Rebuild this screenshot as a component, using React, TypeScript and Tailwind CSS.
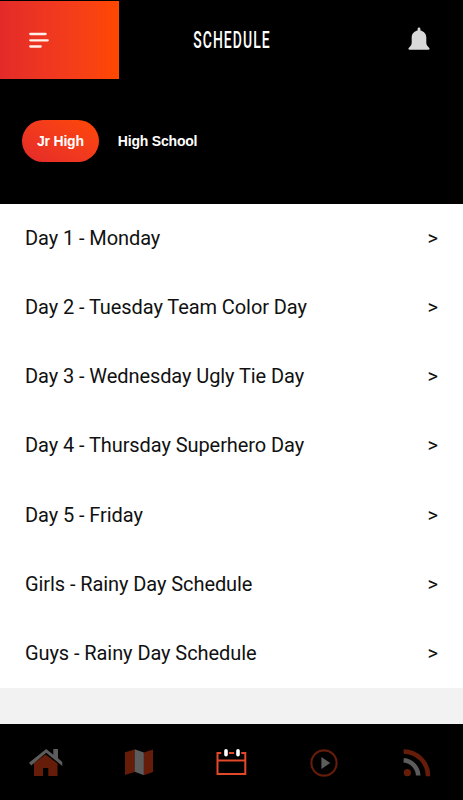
import { useState } from 'react'
import clsx from 'clsx'

const DAYS = [
  'Day 1 - Monday',
  'Day 2 - Tuesday Team Color Day',
  'Day 3 - Wednesday Ugly Tie Day',
  'Day 4 - Thursday Superhero Day',
  'Day 5 - Friday',
  'Girls - Rainy Day Schedule',
  'Guys - Rainy Day Schedule',
]

const GROUPS = ['Jr High', 'High School']

function MenuIcon() {
  return (
    <svg width="20" height="17" viewBox="0 0 20 17" stroke="#fff0ea" strokeWidth="2.3" strokeLinecap="round">
      <path d="M1.3 2H16.6M1.3 8.3H18.8M1.3 14.5H11.7" />
    </svg>
  )
}

function BellIcon() {
  return (
    <svg width="22" height="24" viewBox="0 0 22 24" fill="#d9d9d9">
      <path d="M11 .6c.8 0 1.4.6 1.4 1.4v1.5c3.4.7 5.9 3.4 5.9 6.9v5.2c0 1.8.6 3.2 2.3 4.7.6.5 1.1 1.1.9 1.8-.1.5-.5.7-1.1.7H1.6c-.6 0-1-.2-1.1-.7-.2-.7.3-1.3.9-1.8 1.7-1.5 2.3-2.9 2.3-4.7v-5.2c0-3.5 2.5-6.2 5.9-6.9V2C9.6 1.2 10.2.6 11 .6z" />
    </svg>
  )
}

function HomeIcon() {
  return (
    <svg width="34" height="28" viewBox="0 0 34 28">
      <path d="M5 14.2 16.5 5.5 28.5 14.5V27H19.3V19H14V27H5z" fill="#651c08" />
      <path d="M24.3 0H29V9.3L33.3 13V17L17.2 3.7 2.2 16.6 0 13.8 17.2 0 24.3 5.8z" fill="#5c5c5c" />
    </svg>
  )
}

function MapIcon() {
  return (
    <svg width="28" height="27" viewBox="0 0 28 27">
      <path d="M0 3.2 9.6.6V23L0 26z" fill="#651c08" />
      <path d="M9.6.2 18.9 3.6V26.2L9.6 22.8z" fill="#5c5c5c" />
      <path d="M18.9 3.6 28 .6V23L18.9 26.2z" fill="#651c08" />
    </svg>
  )
}

function CalendarIcon() {
  return (
    <svg width="31" height="28" viewBox="0 0 31 28" fill="none">
      <path d="M5.2 4H1.5V25H29.3V4H25.3M13 4H18M1.5 11.5H29.3" stroke="#e34929" strokeWidth="2" />
      <path d="M10 1.8V5.8M22 1.8V5.8" stroke="#fff" strokeWidth="3.6" strokeLinecap="round" />
    </svg>
  )
}

function PlayIcon() {
  return (
    <svg width="28" height="28" viewBox="0 0 28 28">
      <circle cx="14" cy="14" r="12.6" fill="none" stroke="#651c08" strokeWidth="2.1" />
      <path d="M11.4 8V20L20.2 14z" fill="#5c5c5c" />
    </svg>
  )
}

function FeedIcon() {
  return (
    <svg width="28" height="28" viewBox="0 0 28 28" fill="none">
      <path d="M.6 2.5A24.5 24.5 0 0 1 25 27.2" stroke="#651c08" strokeWidth="4.5" />
      <path d="M.6 11.2A16 16 0 0 1 15.2 26.5" stroke="#5c5c5c" strokeWidth="4.5" />
      <circle cx="4.4" cy="23.7" r="3.6" fill="#651c08" />
    </svg>
  )
}

const TABS = [
  { label: 'Home', Icon: HomeIcon },
  { label: 'Map', Icon: MapIcon },
  { label: 'Schedule', Icon: CalendarIcon },
  { label: 'Videos', Icon: PlayIcon },
  { label: 'Feed', Icon: FeedIcon },
]

function Header() {
  return (
    <header className="flex h-[79px] items-center justify-between">
      <div className="mt-px flex h-[78px] w-[119px] items-center bg-linear-to-r from-[#e42a29] to-[#ff4800] pl-[29px]">
        <button aria-label="Menu">
          <MenuIcon />
        </button>
      </div>
      <h1 className="flex w-[120px] scale-x-[0.58] justify-center font-['Roboto',sans-serif] text-[24px] font-medium tracking-[1.9px] whitespace-nowrap text-white">
        SCHEDULE
      </h1>
      <div className="flex w-[119px] justify-end pr-[33px] pb-[2px]">
        <button aria-label="Notifications">
          <BellIcon />
        </button>
      </div>
    </header>
  )
}

export default function App() {
  const [group, setGroup] = useState('Jr High')

  return (
    <div className="flex h-[800px] w-[463px] flex-col overflow-hidden bg-black">
      <Header />
      <div className="flex h-[125px] items-center pb-px pl-[22px]">
        {GROUPS.map((name) => (
          <button
            key={name}
            onClick={() => setGroup(name)}
            className={clsx(
              "h-[42px] rounded-full px-[15px] font-['Liberation_Sans',Arial,sans-serif] text-[14px] font-bold tracking-[-0.2px] whitespace-nowrap text-white",
              name === group ? 'mr-1 bg-linear-to-tr from-[#e42a29] to-[#ff4800]' : 'bg-transparent',
            )}
          >
            {name}
          </button>
        ))}
      </div>
      <ul className="grid h-[484px] auto-rows-fr bg-white">
        {DAYS.map((day) => (
          <li
            key={day}
            className="flex items-center justify-between pr-[25px] pb-px pl-[25px] font-['Roboto',sans-serif] text-[20px] tracking-[-0.08px] text-[#111]"
          >
            <span>{day}</span>
            <span>&gt;</span>
          </li>
        ))}
      </ul>
      <div className="h-9 bg-[#f2f2f2]" />
      <nav className="grid flex-1 grid-cols-5 pt-px">
        {TABS.map(({ label, Icon }) => (
          <button key={label} aria-label={label} className="flex items-center justify-center">
            <Icon />
          </button>
        ))}
      </nav>
    </div>
  )
}
